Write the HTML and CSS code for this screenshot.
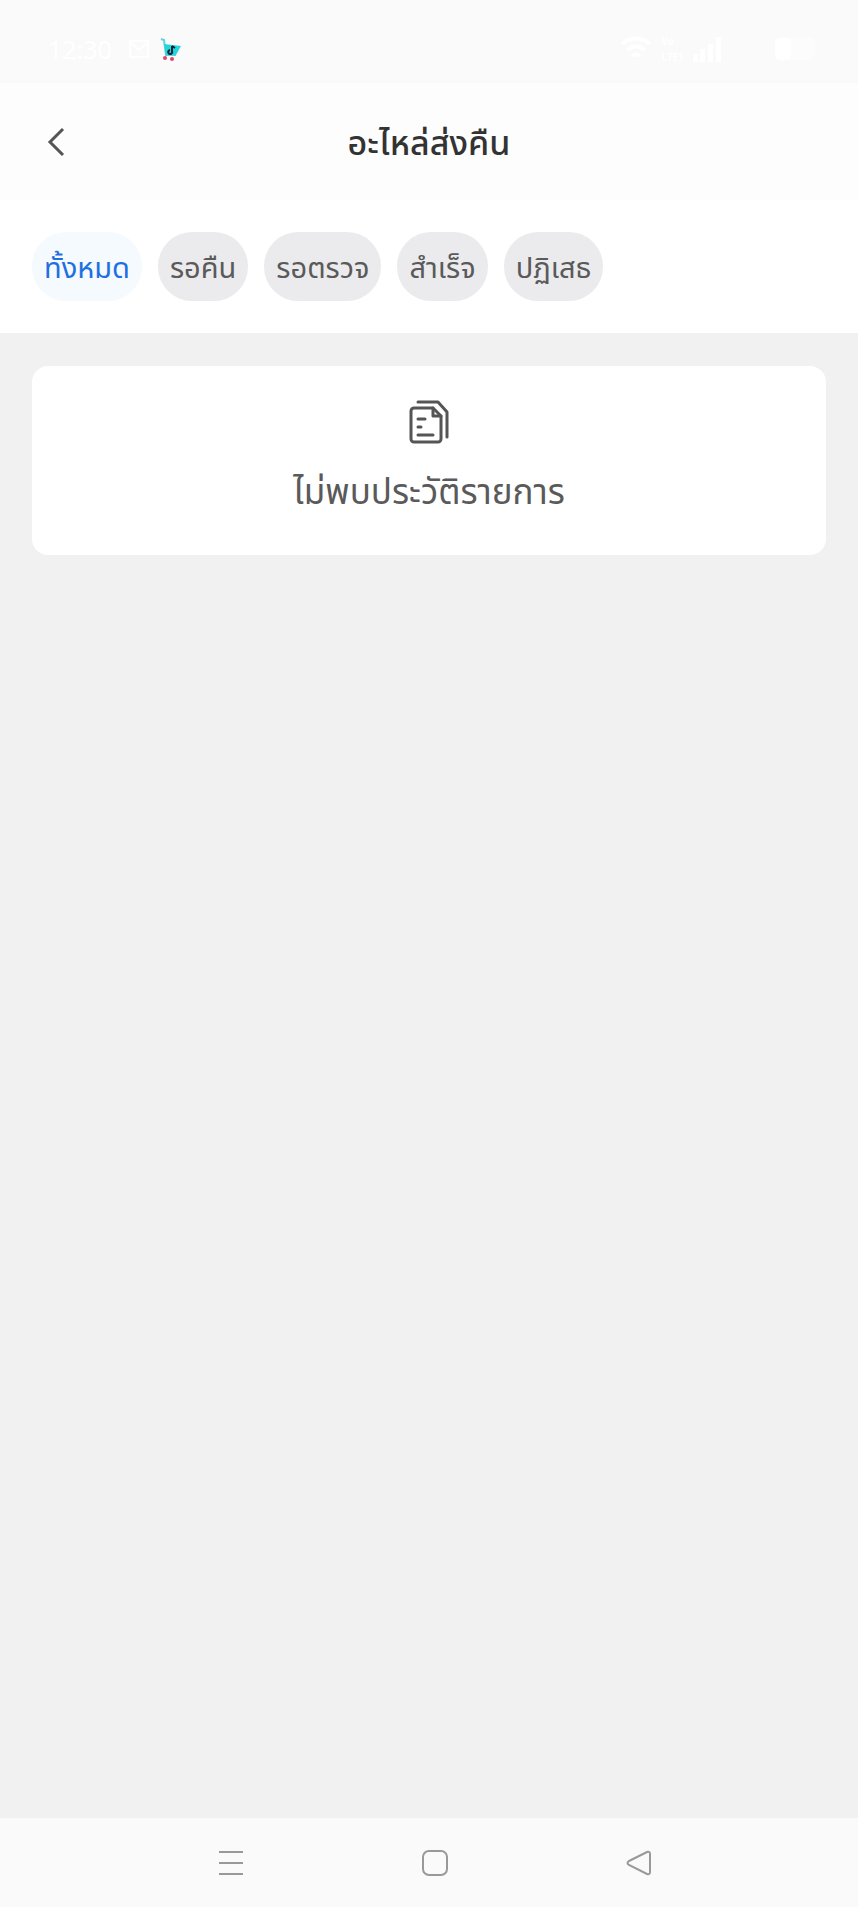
FILE: index.html
```html
<!DOCTYPE html>
<html lang="th">

<head>
    <meta charset="UTF-8">
    <meta name="viewport" content="width=device-width, initial-scale=1.0">
    <title>อะไหล่ส่งคืน</title>
    <link rel="stylesheet" href="styles.css">
</head>

<body>
    <!-- status bar -->
    <div class="status">
        <span class="time">12:30</span>
        <svg class="mail" width="22" height="20" viewBox="0 0 22 20">
            <path d="M2 2h18v16H2zM2 3l9 8 9-8" fill="none" stroke="#fff" stroke-width="2" />
        </svg>
        <svg class="cart" width="22" height="24" viewBox="0 0 22 24">
            <path d="M1 2l3 1 2 15h10" fill="none" stroke="#5fd3dc" stroke-width="2" />
            <path d="M4 7l17 2-5 9H6z" fill="#25d5dc" />
            <path d="M12 9v5a2 2 0 1 1-2-1M12 9l3 2" fill="none" stroke="#123" stroke-width="2" />
            <circle cx="5" cy="21" r="2" fill="#e0466a" />
            <circle cx="12" cy="22" r="2" fill="#e0466a" />
        </svg>
        <div class="signals">
            <svg width="34" height="26" viewBox="0 0 34 26" fill="none" stroke="#fff" stroke-width="4">
                <path d="M2 8q14-11 28 0M7 14q9-7 18 0M12 20q4-3 8 0" />
            </svg>
            <div class="lte">
                <span>Vo</span>
                <span>LTE1</span>
            </div>
            <svg width="30" height="26" viewBox="0 0 30 26" fill="#fff">
                <path d="M1 18h5v8H1zM8 13h5v13H8zM16 8h5v18h-5zM24 1h5v25h-5z" />
            </svg>
            <svg class="battery" width="44" height="24" viewBox="0 0 44 24">
                <rect x="1" y="1" width="40" height="22" rx="6" fill="#fcfcfc" />
                <rect x="1" y="1" width="16" height="22" rx="5" fill="#fff" />
            </svg>
        </div>
    </div>

    <header class="header">
        <button class="back" type="button" aria-label="กลับ">
            <svg width="18" height="30" viewBox="0 0 18 30">
                <path d="M16 2L3 15l13 13" />
            </svg>
        </button>
        <h1>อะไหล่ส่งคืน</h1>
    </header>

    <nav class="tabs">
        <button class="active" type="button">ทั้งหมด</button>
        <button type="button">รอคืน</button>
        <button type="button">รอตรวจ</button>
        <button type="button">สำเร็จ</button>
        <button type="button">ปฏิเสธ</button>
    </nav>

    <main class="content">
        <div class="empty">
            <svg width="40" height="44" viewBox="0 0 40 44">
                <path d="M9 2h20l9 10v25" />
                <path d="M5 8h19l8 8v23a3 3 0 0 1-3 3H5a3 3 0 0 1-3-3V11a3 3 0 0 1 3-3z" />
                <path d="M24 8v8h8M9 19h7M9 27h3M9 35h15" />
            </svg>
            <p>ไม่พบประวัติรายการ</p>
        </div>
    </main>

    <!-- system navigation -->
    <footer class="sysnav">
        <button type="button" aria-label="เมนู">
            <svg width="26" height="26" viewBox="0 0 26 26">
                <path d="M1 2h24M1 13h24M1 24h24" />
            </svg>
        </button>
        <button type="button" aria-label="หน้าหลัก">
            <svg width="26" height="26" viewBox="0 0 26 26">
                <rect x="1" y="1" width="24" height="24" rx="6" />
            </svg>
        </button>
        <button type="button" aria-label="ย้อนกลับ">
            <svg width="26" height="26" viewBox="0 0 26 26">
                <path d="M3 11L21 2q3-1 3 2v18q0 3-3 2L3 15q-3-2 0-4z" />
            </svg>
        </button>
    </footer>
</body>

</html>
```

FILE: styles.css
```css
* {
    padding: 0;
    margin: 0;
    box-sizing: border-box;
}

body {
    min-height: 100vh;
    display: flex;
    flex-direction: column;
    background: #f1f1f1;
    color: #5a5a5a;
    font-family: "Noto Sans", "Noto Sans Thai", "Liberation Sans", sans-serif;
}

button {
    border: none;
    background: none;
    font: inherit;
    color: inherit;
}

svg {
    display: block;
}

.status {
    height: 83px;
    padding: 14px 40px 0 48px;
    display: flex;
    align-items: center;
    background: #fafafa;
    color: #fff;
}

.status .time {
    font-size: 25px;
}

.status .mail {
    margin-left: 16px;
}

.status .cart {
    margin-left: 10px;
}

.status .signals {
    margin-left: auto;
    display: flex;
    align-items: center;
    gap: 8px;
}

.status .lte {
    display: flex;
    flex-direction: column;
    font-size: 10px;
    line-height: 16px;
    font-weight: bold;
}

.status .battery {
    margin-left: 44px;
}

.header {
    height: 117px;
    padding: 0 32px;
    display: grid;
    grid-template-columns: 48px 1fr 48px;
    align-items: center;
    background: #fdfdfd;
}

.header .back {
    height: 48px;
    display: flex;
    align-items: center;
    justify-content: center;
}

.header path {
    fill: none;
    stroke: #555;
    stroke-width: 3;
}

.header h1 {
    text-align: center;
    font-size: 34px;
    line-height: 48px;
    font-weight: 500;
    color: #333;
}

.tabs {
    padding: 32px;
    display: flex;
    flex-wrap: wrap;
    gap: 16px;
    background: #fff;
}

.tabs button {
    height: 69px;
    padding: 0 12px;
    border-radius: 34px;
    background: #ebebee;
    font-size: 29px;
    line-height: 40px;
}

.tabs .active {
    background: #f5faff;
    color: #1f6fe0;
}

.content {
    flex: 1;
    padding: 33px 32px;
}

.empty {
    padding: 34px 32px 40px;
    display: flex;
    flex-direction: column;
    align-items: center;
    gap: 23px;
    border-radius: 16px;
    background: #fff;
    font-size: 35px;
    line-height: 48px;
}

.empty path {
    fill: none;
    stroke: #555;
    stroke-width: 3;
    stroke-linecap: round;
    stroke-linejoin: round;
}

.sysnav {
    height: 89px;
    padding: 0 117px 0 129px;
    display: flex;
    justify-content: space-around;
    align-items: center;
    background: #fafafa;
}

.sysnav svg {
    fill: none;
    stroke: #999;
    stroke-width: 2;
}
```
